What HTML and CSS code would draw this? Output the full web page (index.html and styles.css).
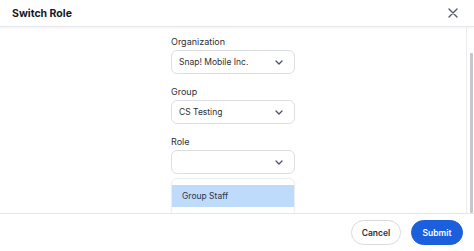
FILE: index.html
```html
<!DOCTYPE html>
<html>
<head>
<meta charset="utf-8">
<link rel="stylesheet" href="styles.css">
</head>
<body>
<div class="modal">
  <header class="header">
    <h1 class="title">Switch Role</h1>
    <button class="close" aria-label="Close">
      <svg width="10" height="10" viewBox="0 0 10 10"><path d="M1 1L9 9M9 1L1 9" stroke="#545c6b" stroke-width="1.4" stroke-linecap="round"/></svg>
    </button>
  </header>
  <div class="main">
    <div class="content">
      <div class="form">
        <label class="label">Organization</label>
        <div class="select"><span>Snap! Mobile Inc.</span><svg class="chev" width="8" height="5" viewBox="0 0 8 5"><path d="M1 1L4 4L7 1" fill="none" stroke="#4a5366" stroke-width="1.3" stroke-linecap="round" stroke-linejoin="round"/></svg></div>
        <label class="label">Group</label>
        <div class="select"><span>CS Testing</span><svg class="chev" width="8" height="5" viewBox="0 0 8 5"><path d="M1 1L4 4L7 1" fill="none" stroke="#4a5366" stroke-width="1.3" stroke-linecap="round" stroke-linejoin="round"/></svg></div>
        <label class="label">Role</label>
        <div class="select"><span></span><svg class="chev" width="8" height="5" viewBox="0 0 8 5"><path d="M1 1L4 4L7 1" fill="none" stroke="#4a5366" stroke-width="1.3" stroke-linecap="round" stroke-linejoin="round"/></svg></div>
        <div class="menu">
          <div class="option">Group Staff</div>
        </div>
      </div>
    </div>
    <div class="scrollbar"><div class="thumb"></div></div>
  </div>
  <footer class="footer">
    <button class="btn btn-cancel">Cancel</button>
    <button class="btn btn-submit">Submit</button>
  </footer>
</div>
</body>
</html>
```
FILE: styles.css
```css
* { box-sizing: border-box; }
html, body { margin: 0; padding: 0; }
body {
  width: 474px;
  height: 251px;
  overflow: hidden;
  background: #fff;
  font-family: Inter, "Noto Sans", sans-serif;
  color: #1f2430;
}
.modal {
  display: flex;
  flex-direction: column;
  height: 251px;
}
.header {
  height: 27px;
  flex: none;
  display: flex;
  align-items: center;
  justify-content: space-between;
  padding: 0 16px 0 12px;
  border-bottom: 1px solid #e6e7ea;
  box-shadow: 0 1px 2px rgba(0,0,0,0.05);
}
.title {
  margin: 0;
  font-size: 10.5px;
  font-weight: 700;
  color: #14171f;
}
.close {
  border: 0;
  background: none;
  padding: 0;
  width: 10px;
  height: 10px;
  display: flex;
}
.main {
  flex: 1;
  display: flex;
  overflow: hidden;
}
.content {
  flex: 1;
  display: flex;
  justify-content: center;
  overflow: hidden;
}
.form {
  width: 124px;
  padding-top: 9px;
  display: flex;
  flex-direction: column;
}
.label {
  font-size: 9px;
  line-height: 12px;
  color: #2b2f38;
  margin-top: 12px;
  margin-bottom: 2px;
}
.label:first-child { margin-top: 0; }
.select {
  height: 24px;
  flex: none;
  border: 1px solid #dcdee3;
  border-radius: 6px;
  display: flex;
  align-items: center;
  justify-content: space-between;
  padding: 0 11px 0 7px;
  font-size: 8.5px;
  color: #2b2f38;
}
.chev { margin-top: 1px; }
.menu {
  margin-top: 4px;
  border: 1px solid #eceef1;
  border-radius: 6px;
  padding: 6px 0 8px;
  box-shadow: 0 1px 3px rgba(0,0,0,0.04);
}
.option {
  height: 22px;
  display: flex;
  align-items: center;
  padding-left: 10px;
  background: #bfdbfc;
  font-size: 8.5px;
  color: #2b3445;
}
.scrollbar {
  width: 8px;
  flex: none;
  border-left: 1px solid #ececee;
  display: flex;
  flex-direction: column;
  justify-content: flex-end;
  padding: 0 1px 0 3px;
}
.thumb {
  height: 160px;
  background: #c6c7ca;
  border-radius: 1px;
}
.footer {
  height: 38px;
  flex: none;
  border-top: 1px solid #e6e7ea;
  display: flex;
  justify-content: flex-end;
  align-items: center;
  gap: 10px;
  padding: 0 11px 0 0;
}
.btn {
  font-family: Inter, "Noto Sans", sans-serif;
  font-size: 8.5px;
  font-weight: 600;
  height: 25px;
  border-radius: 13px;
  padding: 0;
  cursor: pointer;
}
.btn-cancel {
  width: 50px;
  background: #fff;
  border: 1px solid #d8dadf;
  color: #2b2f38;
}
.btn-submit {
  width: 52px;
  background: #1b5fdc;
  border: 1px solid #1b5fdc;
  color: #fff;
}
```
